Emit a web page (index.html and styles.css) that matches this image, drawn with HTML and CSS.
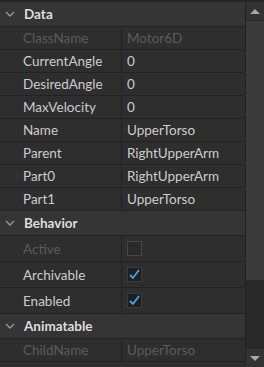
FILE: index.html
```html
<!DOCTYPE html>
<html lang="en">
<head>
    <meta charset="UTF-8">
    <title>Properties</title>
    <link rel="stylesheet" href="styles.css">
</head>
<body>
    <div class="panel">
        <div class="props">
            <div class="section">
                <svg class="chevron" width="10" height="6" viewBox="0 0 10 6"><path d="M1 1 L5 5 L9 1" fill="none" stroke="#9a9a9a" stroke-width="1.3"/></svg>
                <span>Data</span>
            </div>
            <div class="row disabled"><div class="name">ClassName</div><div class="value">Motor6D</div></div>
            <div class="row"><div class="name">CurrentAngle</div><div class="value">0</div></div>
            <div class="row"><div class="name">DesiredAngle</div><div class="value">0</div></div>
            <div class="row"><div class="name">MaxVelocity</div><div class="value">0</div></div>
            <div class="row"><div class="name">Name</div><div class="value">UpperTorso</div></div>
            <div class="row"><div class="name">Parent</div><div class="value">RightUpperArm</div></div>
            <div class="row"><div class="name">Part0</div><div class="value">RightUpperArm</div></div>
            <div class="row"><div class="name">Part1</div><div class="value">UpperTorso</div></div>

            <div class="section">
                <svg class="chevron" width="10" height="6" viewBox="0 0 10 6"><path d="M1 1 L5 5 L9 1" fill="none" stroke="#9a9a9a" stroke-width="1.3"/></svg>
                <span>Behavior</span>
            </div>
            <div class="row tall disabled"><div class="name">Active</div><div class="value"><span class="check off"></span></div></div>
            <div class="row tall"><div class="name">Archivable</div><div class="value"><span class="check"><svg width="13" height="13" viewBox="0 0 13 13"><path d="M2 7 L5 10 L11 2" fill="none" stroke="#3ea8f5" stroke-width="1.8"/></svg></span></div></div>
            <div class="row tall"><div class="name">Enabled</div><div class="value"><span class="check"><svg width="13" height="13" viewBox="0 0 13 13"><path d="M2 7 L5 10 L11 2" fill="none" stroke="#3ea8f5" stroke-width="1.8"/></svg></span></div></div>

            <div class="section">
                <svg class="chevron" width="10" height="6" viewBox="0 0 10 6"><path d="M1 1 L5 5 L9 1" fill="none" stroke="#9a9a9a" stroke-width="1.3"/></svg>
                <span>Animatable</span>
            </div>
            <div class="row disabled"><div class="name">ChildName</div><div class="value">UpperTorso</div></div>
        </div>
        <div class="scrollbar">
            <div class="arrow up"></div>
            <div class="track"><div class="thumb"></div></div>
            <div class="arrow down"></div>
        </div>
    </div>
</body>
</html>
```

FILE: styles.css
```css
html, body {
    margin: 0;
    padding: 0;
    background: #2e2e2e;
}
body {
    font-family: Lato, "Noto Sans", sans-serif;
    font-size: 13.5px;
    color: #cccccc;
    width: 264px;
    height: 367px;
    overflow: hidden;
}
.panel {
    display: flex;
    height: 365px;
    border-top: 2px solid #262626;
}
.props {
    flex: 1;
    overflow: hidden;
}
.section {
    display: flex;
    align-items: center;
    height: 24px;
    background: #353535;
    border-bottom: 1px solid #222222;
    font-weight: bold;
    color: #dddddd;
}
.chevron {
    margin: 0 9px 0 5px;
}
.row {
    display: flex;
    height: 22px;
    border-bottom: 1px solid #222222;
}
.row.tall {
    height: 25px;
}
.name {
    width: 98px;
    padding-left: 23px;
    display: flex;
    align-items: center;
    border-right: 1px solid #222222;
}
.value {
    flex: 1;
    padding-left: 5px;
    display: flex;
    align-items: center;
}
.disabled {
    color: #5c5c5c;
}
.check {
    width: 13px;
    height: 13px;
    border: 1px solid #3c3c3c;
    background: #1f1f1f;
    display: flex;
}
.check.off {
    border-color: #474747;
    background: #2a2a2a;
}
.scrollbar {
    width: 18px;
    display: flex;
    flex-direction: column;
    background: #292929;
    border-left: 1px solid #222222;
}
.arrow {
    height: 18px;
    display: flex;
    align-items: center;
    justify-content: center;
    background: #333333;
}
.arrow.up::after {
    content: "";
    border-left: 5px solid transparent;
    border-right: 5px solid transparent;
    border-bottom: 5px solid #a8a8a8;
}
.arrow.down::after {
    content: "";
    border-left: 5px solid transparent;
    border-right: 5px solid transparent;
    border-top: 5px solid #a8a8a8;
}
.track {
    flex: 1;
    padding-top: 1px;
}
.thumb {
    height: 259px;
    background: #3a3a3a;
}
```
